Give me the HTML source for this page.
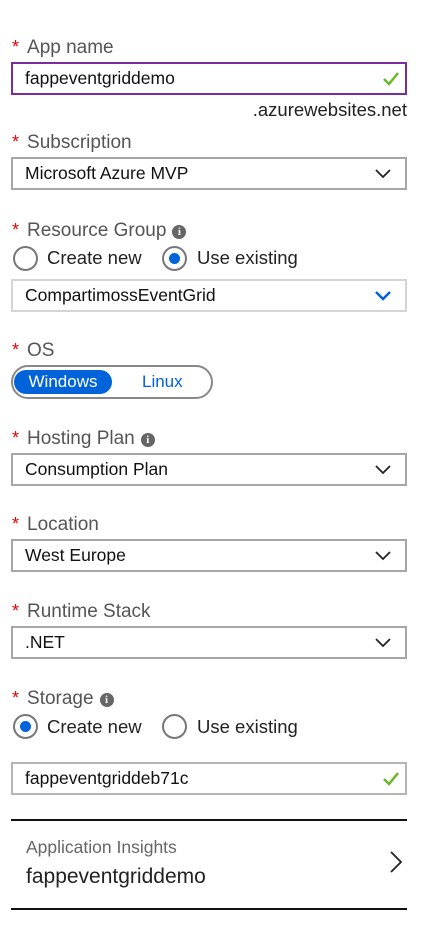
<!DOCTYPE html>
<html><head><meta charset="utf-8"><style>
*{margin:0;padding:0;box-sizing:border-box}
body{width:423px;height:925px;background:#fff;font-family:"Liberation Sans",sans-serif;position:relative;overflow:hidden;color:#000}
.a{position:absolute}
.lbl{position:absolute;left:12px;font-size:19px;color:#555;line-height:22px}
.lbl b{color:#e00;font-weight:normal;margin-right:8px;font-size:18px}
.box{position:absolute;left:11px;width:396px;height:33px;border:2px solid #a6a6a6;font-size:17.5px;line-height:29px;padding-left:12px;color:#111}
.chev{position:absolute;right:14px;top:8px}
.info{display:inline-block;width:14px;height:14px;border-radius:50%;background:#666;color:#fff;font-size:11px;font-weight:bold;line-height:14px;text-align:center;vertical-align:1px;margin-left:6px;font-family:"Liberation Serif",serif}
.rad{position:absolute;width:25px;height:25px;border:2px solid #777;border-radius:50%}
.rad.on::after{content:"";position:absolute;left:5px;top:5px;width:11px;height:11px;border-radius:50%;background:#0063d9}
.rt{position:absolute;font-size:18.5px;color:#222;line-height:22px}
.line{position:absolute;left:11px;width:396px;height:2px;background:#111}
</style></head><body>
<div class="lbl" style="top:36px"><b>*</b>App name</div>
<div class="box" style="top:62px;border-color:#7a2c9e">fappeventgriddemo
<svg class="a" style="right:6px;top:8px" width="16" height="14" viewBox="0 0 16 14"><path d="M1 7l5 5L15 1" stroke="#68b828" stroke-width="2.5" fill="none"/></svg></div>
<div class="a" style="right:16px;top:99px;font-size:18.5px;color:#222">.azurewebsites.net</div>

<div class="lbl" style="top:131px"><b>*</b>Subscription</div>
<div class="box" style="top:157px">Microsoft Azure MVP<svg class="chev" width="16" height="12" viewBox="0 0 16 12"><path d="M1 3l7 7 7-7" stroke="#222" stroke-width="1.8" fill="none"/></svg></div>

<div class="lbl" style="top:219px"><b>*</b>Resource Group<span class="info">i</span></div>
<div class="rad" style="left:13px;top:246px"></div><div class="rt" style="left:47px;top:247px">Create new</div>
<div class="rad on" style="left:162px;top:246px"></div><div class="rt" style="left:197px;top:247px">Use existing</div>
<div class="box" style="top:279px;border-color:#d5d5d5">CompartimossEventGrid<svg class="chev" width="16" height="12" viewBox="0 0 16 12"><path d="M1 3l7 7 7-7" stroke="#0063d9" stroke-width="2.5" fill="none"/></svg></div>

<div class="lbl" style="top:339px"><b>*</b>OS</div>
<div class="a" style="left:11px;top:365px;width:202px;height:34px;border:2px solid #888;border-radius:17px"></div>
<div class="a" style="left:14px;top:370px;width:98px;height:24px;border-radius:12px;background:#0063d9;color:#fff;font-size:17px;line-height:24px;text-align:center">Windows</div>
<div class="a" style="left:142px;top:370px;font-size:17px;line-height:24px;color:#0063d9">Linux</div>

<div class="lbl" style="top:427px"><b>*</b>Hosting Plan<span class="info">i</span></div>
<div class="box" style="top:453px">Consumption Plan<svg class="chev" width="16" height="12" viewBox="0 0 16 12"><path d="M1 3l7 7 7-7" stroke="#222" stroke-width="1.8" fill="none"/></svg></div>

<div class="lbl" style="top:513px"><b>*</b>Location</div>
<div class="box" style="top:539px">West Europe<svg class="chev" width="16" height="12" viewBox="0 0 16 12"><path d="M1 3l7 7 7-7" stroke="#222" stroke-width="1.8" fill="none"/></svg></div>

<div class="lbl" style="top:600px"><b>*</b>Runtime Stack</div>
<div class="box" style="top:626px">.NET<svg class="chev" width="16" height="12" viewBox="0 0 16 12"><path d="M1 3l7 7 7-7" stroke="#222" stroke-width="1.8" fill="none"/></svg></div>

<div class="lbl" style="top:687px"><b>*</b>Storage<span class="info">i</span></div>
<div class="rad on" style="left:13px;top:714px"></div><div class="rt" style="left:47px;top:716px">Create new</div>
<div class="rad" style="left:162px;top:714px"></div><div class="rt" style="left:197px;top:716px">Use existing</div>
<div class="box" style="top:762px;border-color:#b5b5b5">fappeventgriddeb71c
<svg class="a" style="right:6px;top:8px" width="16" height="14" viewBox="0 0 16 14"><path d="M1 7l5 5L15 1" stroke="#68b828" stroke-width="2.5" fill="none"/></svg></div>

<div class="line" style="top:819px"></div>
<div class="a" style="left:26px;top:837px;font-size:17.5px;color:#666">Application Insights</div>
<div class="a" style="left:26px;top:865px;font-size:21px;color:#222">fappeventgriddemo</div>
<svg class="a" style="left:389px;top:850px" width="14" height="24" viewBox="0 0 14 24"><path d="M2 2l10 10L2 22" stroke="#222" stroke-width="1.8" fill="none"/></svg>
<div class="line" style="top:908px"></div>
</body></html>
